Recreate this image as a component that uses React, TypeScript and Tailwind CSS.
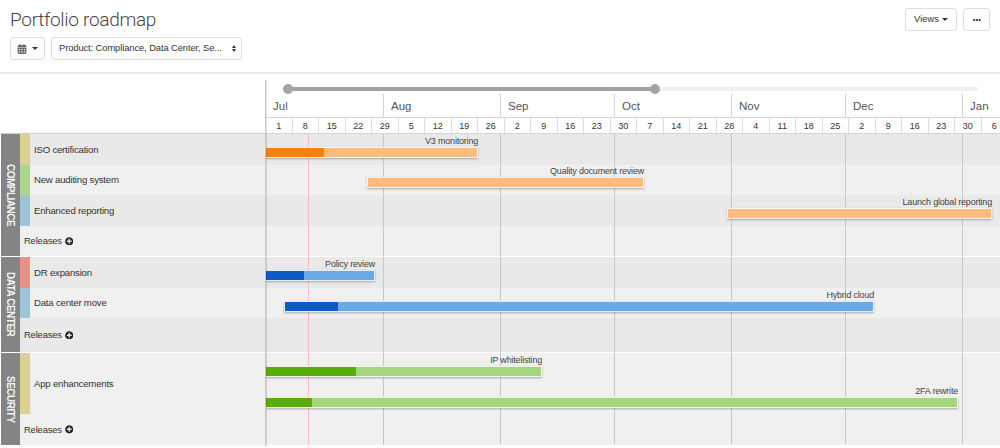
import { FaCalendarAlt, FaEllipsisH, FaPlusCircle } from 'react-icons/fa';

const months = [
  { name: 'Jul', width: 'w-[118px]' },
  { name: 'Aug', width: 'w-[117px]' },
  { name: 'Sep', width: 'w-[114px]' },
  { name: 'Oct', width: 'w-[117px]' },
  { name: 'Nov', width: 'w-[114px]' },
  { name: 'Dec', width: 'w-[117px]' },
  { name: 'Jan', width: 'w-[38px]' },
];

const days = [1, 8, 15, 22, 29, 5, 12, 19, 26, 2, 9, 16, 23, 30, 7, 14, 21, 28, 4, 11, 18, 25, 2, 9, 16, 23, 30, 6];

const groups = [
  {
    name: 'COMPLIANCE',
    rows: [
      { label: 'ISO certification', strip: 'bg-[#dbd196]', height: 'h-[31px]', bg: 'bg-[#e9e9e9]' },
      { label: 'New auditing system', strip: 'bg-[#acd68d]', height: 'h-[30px]', bg: 'bg-[#f0f0f0]' },
      { label: 'Enhanced reporting', strip: 'bg-[#9cc5d8]', height: 'h-[31px]', bg: 'bg-[#e9e9e9]' },
    ],
    releases: { height: 'h-[30px]', bg: 'bg-[#f0f0f0]' },
  },
  {
    name: 'DATA CENTER',
    rows: [
      { label: 'DR expansion', strip: 'bg-[#ea8f85]', height: 'h-[31px]', bg: 'bg-[#e9e9e9]' },
      { label: 'Data center move', strip: 'bg-[#9cc5d8]', height: 'h-[30px]', bg: 'bg-[#f0f0f0]' },
    ],
    releases: { height: 'h-[34px]', bg: 'bg-[#e9e9e9]' },
  },
  {
    name: 'SECURITY',
    rows: [{ label: 'App enhancements', strip: 'bg-[#dbd196]', height: 'h-[61px]', bg: 'bg-[#f0f0f0]' }],
    releases: { height: 'h-[31px]', bg: 'bg-[#f0f0f0]' },
  },
];

function Bar({ label, box, done, dark, light }: { label: string; box: string; done: string; dark: string; light: string }) {
  return (
    <div className={`relative z-10 flex flex-col items-end ${box}`}>
      <span className="h-[13px] text-[9px] leading-[15px] tracking-[-0.2px] text-[#444] whitespace-nowrap">{label}</span>
      <div className={`flex h-[11px] w-full border border-white/80 shadow-[0_1px_2px_rgba(0,0,0,0.3)] ${light}`}>
        <div className={`h-full ${done} ${dark}`} />
      </div>
    </div>
  );
}

function ReleasesRow({ height, bg }: { height: string; bg: string }) {
  return (
    <div className={`flex items-center gap-[3px] pl-[4px] text-[9.4px] tracking-[-0.15px] text-[#333] ${height} ${bg}`}>
      <span className="mt-[1px]">Releases</span>
      <FaPlusCircle className="text-[8.5px] text-[#222]" />
    </div>
  );
}

export default function App() {
  return (
    <div className="h-[448px] w-[1000px] overflow-hidden bg-white font-['Liberation_Sans',sans-serif] text-[#333]">
      {/* Header */}
      <div className="flex h-[74px] justify-between border-b-2 border-[#e8e8e8] pl-[10px] pr-[10px]">
        <div>
          <h1 className="mt-[7px] h-[25px] font-['Roboto',sans-serif] text-[19px] font-light leading-[25px] tracking-[-0.3px] text-[#444]">Portfolio roadmap</h1>
          <div className="mt-[5px] flex gap-[6px]">
            <button className="flex h-[23px] w-[35px] items-center justify-center gap-[5px] rounded-[3px] border border-[#ddd]">
              <FaCalendarAlt className="text-[10px] text-[#666]" />
              <span className="border-x-[3px] border-t-[3px] border-x-transparent border-t-[#333]" />
            </button>
            <button className="flex h-[23px] w-[191px] items-center justify-between rounded-[3px] border border-[#ddd] pl-[7px] pr-[5px] text-[9.4px] tracking-[-0.1px] whitespace-nowrap text-[#333]">
              <span>Product: Compliance, Data Center, Se...</span>
              <span className="flex flex-col gap-[1px]">
                <span className="border-x-[2.5px] border-b-[3px] border-x-transparent border-b-[#333]" />
                <span className="border-x-[2.5px] border-t-[3px] border-x-transparent border-t-[#333]" />
              </span>
            </button>
          </div>
        </div>
        <div className="mt-[8px] flex h-[23px] gap-[6px]">
          <button className="flex w-[52px] items-center justify-center gap-[3px] rounded-[3px] border border-[#ddd] text-[9.4px] text-[#333]">
            Views
            <span className="border-x-[3px] border-t-[3px] border-x-transparent border-t-[#333]" />
          </button>
          <button className="flex w-[27px] items-center justify-center rounded-[3px] border border-[#ddd]">
            <FaEllipsisH className="text-[8px] text-[#333]" />
          </button>
        </div>
      </div>

      <div className="flex">
        {/* Left panel */}
        <div className="relative z-20 w-[266px] shrink-0">
          <div className="ml-auto mt-[6px] h-[53px] w-px bg-[#c8c8c8] shadow-[1px_0_1px_rgba(0,0,0,0.12)]" />
          <div className="border-r border-t border-r-[#c8c8c8] border-t-[#cfcfcf] shadow-[1px_0_1px_rgba(0,0,0,0.12)]">
            {groups.map((group) => (
              <div key={group.name} className="flex border-b border-white">
                <div className="flex w-[20px] items-center justify-center border-l border-white bg-[#848484]">
                  <span className="text-[10px] font-bold tracking-[-0.5px] text-[#f4f4f4] [writing-mode:vertical-rl]">{group.name}</span>
                </div>
                <div className="flex-1">
                  {group.rows.map((row) => (
                    <div key={row.label} className={`flex items-center text-[9.6px] tracking-[-0.2px] text-[#333] ${row.height} ${row.bg}`}>
                      <div className={`h-full w-[10px] ${row.strip}`} />
                      <span className="mt-[1px] pl-[4px]">{row.label}</span>
                    </div>
                  ))}
                  <ReleasesRow {...group.releases} />
                </div>
              </div>
            ))}
          </div>
        </div>

        {/* Timeline */}
        <div className="relative h-[372px] flex-1 overflow-hidden">
          <div className="flex h-[20px] items-end pb-[3px] pl-[22px] pr-[21px]">
            <div className="flex h-[4px] w-full items-center rounded-full bg-[#f0f0f0]">
              <div className="relative h-[4px] w-[367px] bg-[#a3a3a3]">
                <span className="absolute -left-[5px] -top-[3px] h-[10px] w-[10px] rounded-full bg-[#a3a3a3]" />
                <span className="absolute -right-[5px] -top-[3px] h-[10px] w-[10px] rounded-full bg-[#a3a3a3]" />
              </div>
            </div>
          </div>
          <div className="flex h-[24px] border-b border-[#d4d4d4]">
            {months.map((month) => (
              <div key={month.name} className={`shrink-0 border-r border-[#d4d4d4] pl-[7px] pt-[4px] text-[11.5px] leading-[16px] text-[#555] ${month.width}`}>
                {month.name}
              </div>
            ))}
          </div>
          <div className="flex h-[16px] w-[742px] border-b border-[#d4d4d4]">
            {days.map((day, i) => (
              <div key={i} className="w-[26.5px] shrink-0 border-r border-[#ddd] text-center text-[9px] leading-[16px] text-[#333]">
                {day}
              </div>
            ))}
          </div>

          {/* Rows */}
          <div className="h-[31px] bg-[#e9e9e9]">
            <Bar label="V3 monitoring" box="w-[212px] [&>div]:border-l-0" done="w-[58px]" dark="bg-[#f7810f]" light="bg-[#fbbc7e]" />
          </div>
          <div className="h-[30px] bg-[#f0f0f0] flow-root">
            <Bar label="Quality document review" box="-mt-[1px] ml-[101px] w-[277px]" done="w-0" dark="" light="bg-[#fbbc7e]" />
          </div>
          <div className="h-[31px] bg-[#e9e9e9]">
            <Bar label="Launch global reporting" box="ml-[461px] w-[265px]" done="w-0" dark="" light="bg-[#fbbc7e]" />
          </div>
          <div className="h-[31px] border-b border-white bg-[#f0f0f0]" />
          <div className="h-[31px] bg-[#e9e9e9]">
            <Bar label="Policy review" box="w-[109px] [&>div]:border-l-0" done="w-[38px]" dark="bg-[#0f5bc4]" light="bg-[#6aa9e4]" />
          </div>
          <div className="h-[30px] bg-[#f0f0f0]">
            <Bar label="Hybrid cloud" box="ml-[18px] w-[590px]" done="w-[53px]" dark="bg-[#0f5bc4]" light="bg-[#6aa9e4]" />
          </div>
          <div className="h-[35px] border-b border-white bg-[#e9e9e9]" />
          <div className="flex h-[61px] flex-col gap-[7px] bg-[#f0f0f0]">
            <Bar label="IP whitelisting" box="w-[276px] [&>div]:border-l-0" done="w-[90px]" dark="bg-[#57ad0a]" light="bg-[#a4d67e]" />
            <Bar label="2FA rewrite" box="w-[692px] [&>div]:border-l-0" done="w-[46px]" dark="bg-[#57ad0a]" light="bg-[#a4d67e]" />
          </div>
          <div className="h-[32px] border-b border-white bg-[#f0f0f0]" />

          {/* Month lines and today marker */}
          <div className="pointer-events-none absolute bottom-[1px] left-0 top-[60px] w-full">
            <span className="absolute bottom-0 left-[117px] top-0 w-px bg-[#c8c8c8]" />
            <span className="absolute bottom-0 left-[234px] top-0 w-px bg-[#c8c8c8]" />
            <span className="absolute bottom-0 left-[348px] top-0 w-px bg-[#c8c8c8]" />
            <span className="absolute bottom-0 left-[465px] top-0 w-px bg-[#c8c8c8]" />
            <span className="absolute bottom-0 left-[579px] top-0 w-px bg-[#c8c8c8]" />
            <span className="absolute bottom-0 left-[696px] top-0 w-px bg-[#c8c8c8]" />
            <span className="absolute bottom-0 left-[42px] top-0 w-px bg-[#f7b9b9]" />
          </div>
        </div>
      </div>
    </div>
  );
}
